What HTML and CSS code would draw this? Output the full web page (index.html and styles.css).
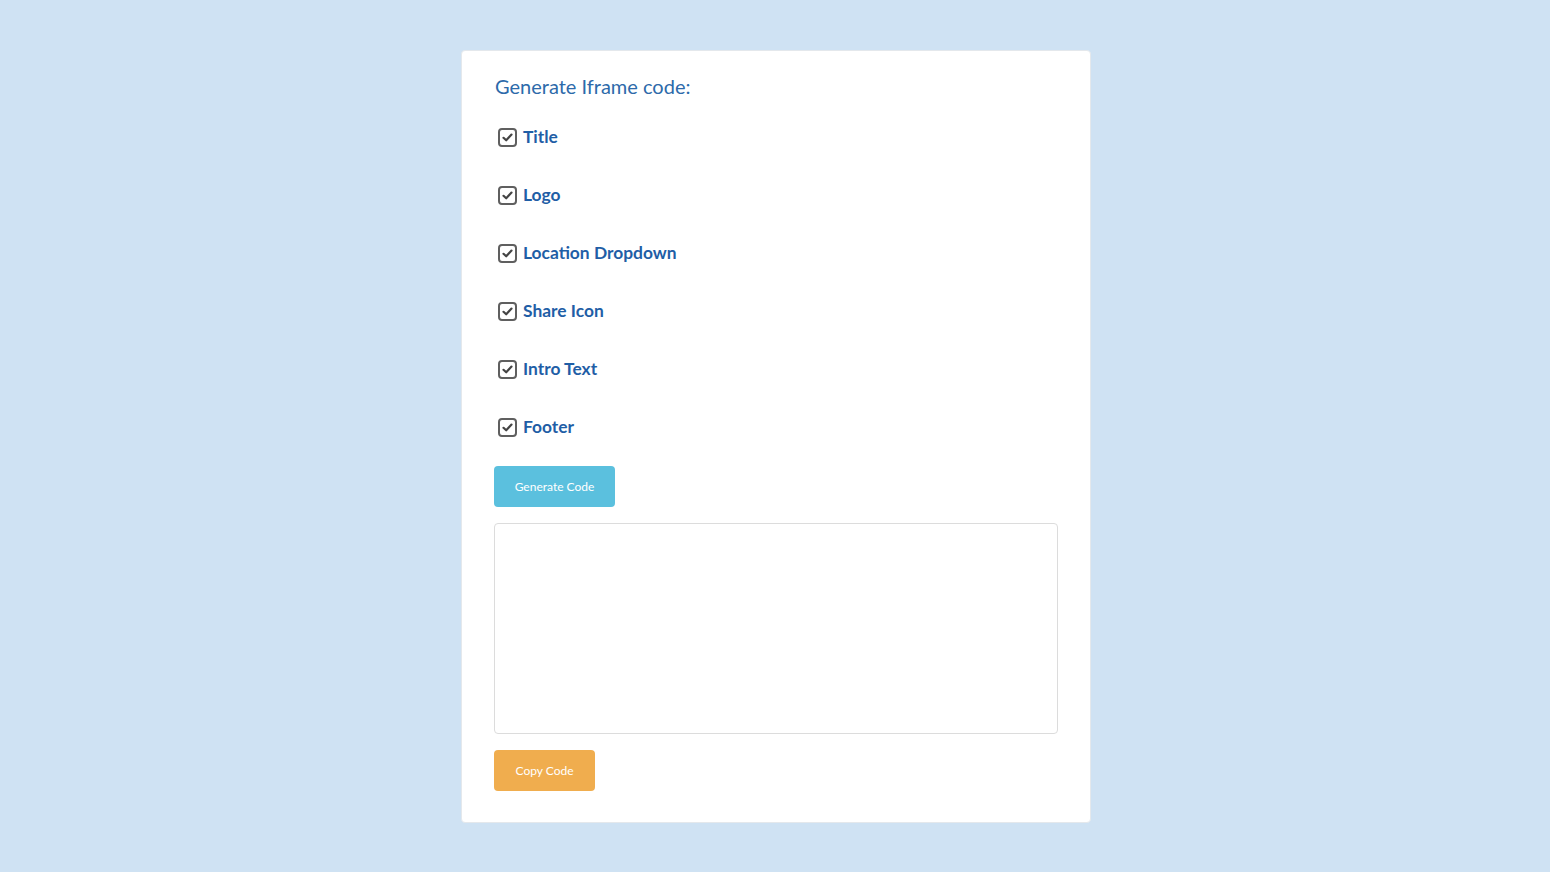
FILE: index.html
```html
<!DOCTYPE html>
<html lang="en">
<head>
<meta charset="utf-8">
<title>Generate Iframe code</title>
<link rel="stylesheet" href="styles.css">
</head>
<body>
<div class="card">
  <h2 class="heading">Generate Iframe code:</h2>
  <ul class="options">
    <li class="option"><span class="box"><svg viewBox="0 0 19 19" width="19" height="19"><rect x="1" y="1" width="17" height="17" rx="3" ry="3" fill="#fff" stroke="#5f5f5f" stroke-width="2"/><path d="M5.5 9.8 L8.2 12.3 L13.5 6.6" fill="none" stroke="#444" stroke-width="2.2" stroke-linecap="round" stroke-linejoin="round"/></svg></span><span class="label">Title</span></li>
    <li class="option"><span class="box"><svg viewBox="0 0 19 19" width="19" height="19"><rect x="1" y="1" width="17" height="17" rx="3" ry="3" fill="#fff" stroke="#5f5f5f" stroke-width="2"/><path d="M5.5 9.8 L8.2 12.3 L13.5 6.6" fill="none" stroke="#444" stroke-width="2.2" stroke-linecap="round" stroke-linejoin="round"/></svg></span><span class="label">Logo</span></li>
    <li class="option"><span class="box"><svg viewBox="0 0 19 19" width="19" height="19"><rect x="1" y="1" width="17" height="17" rx="3" ry="3" fill="#fff" stroke="#5f5f5f" stroke-width="2"/><path d="M5.5 9.8 L8.2 12.3 L13.5 6.6" fill="none" stroke="#444" stroke-width="2.2" stroke-linecap="round" stroke-linejoin="round"/></svg></span><span class="label">Location Dropdown</span></li>
    <li class="option"><span class="box"><svg viewBox="0 0 19 19" width="19" height="19"><rect x="1" y="1" width="17" height="17" rx="3" ry="3" fill="#fff" stroke="#5f5f5f" stroke-width="2"/><path d="M5.5 9.8 L8.2 12.3 L13.5 6.6" fill="none" stroke="#444" stroke-width="2.2" stroke-linecap="round" stroke-linejoin="round"/></svg></span><span class="label">Share Icon</span></li>
    <li class="option"><span class="box"><svg viewBox="0 0 19 19" width="19" height="19"><rect x="1" y="1" width="17" height="17" rx="3" ry="3" fill="#fff" stroke="#5f5f5f" stroke-width="2"/><path d="M5.5 9.8 L8.2 12.3 L13.5 6.6" fill="none" stroke="#444" stroke-width="2.2" stroke-linecap="round" stroke-linejoin="round"/></svg></span><span class="label">Intro Text</span></li>
    <li class="option"><span class="box"><svg viewBox="0 0 19 19" width="19" height="19"><rect x="1" y="1" width="17" height="17" rx="3" ry="3" fill="#fff" stroke="#5f5f5f" stroke-width="2"/><path d="M5.5 9.8 L8.2 12.3 L13.5 6.6" fill="none" stroke="#444" stroke-width="2.2" stroke-linecap="round" stroke-linejoin="round"/></svg></span><span class="label">Footer</span></li>
  </ul>
  <button class="btn btn-info" type="button">Generate Code</button>
  <textarea class="code"></textarea>
  <button class="btn btn-warning" type="button">Copy Code</button>
</div>
</body>
</html>
```
FILE: styles.css
```css
html, body {
  margin: 0;
  padding: 0;
}
body {
  background: #cfe2f3;
  font-family: Lato, "Open Sans", "Liberation Sans", sans-serif;
  min-height: 872px;
}
.card {
  box-sizing: border-box;
  width: 630px;
  height: 773px;
  margin: 50px 0 0 461px;
  background: #fff;
  border: 1px solid #e4e8ec;
  border-radius: 4px;
  padding: 23px 32px 0 32px;
  display: flex;
  flex-direction: column;
  align-items: flex-start;
}
.heading {
  margin: 0 0 0 1px;
  font-size: 20px;
  line-height: 25px;
  font-weight: 400;
  color: #2d6aaa;
}
.options {
  list-style: none;
  margin: 9px 0 0 0;
  padding: 0;
}
.option {
  height: 58px;
  display: flex;
  align-items: center;
  padding-left: 4px;
}
.box {
  width: 19px;
  height: 19px;
  display: flex;
  margin-right: 6px;
}
.label {
  font-size: 17.4px;
  font-weight: 700;
  color: #1f5ea6;
  line-height: 24px;
}
.btn {
  border: 0;
  border-radius: 4px;
  color: #fff;
  font-family: Lato, "Open Sans", "Liberation Sans", sans-serif;
  font-size: 12px;
  height: 41px;
  padding: 0;
  cursor: pointer;
}
.btn-info {
  margin-top: 10px;
  width: 121px;
  background: #5bc0de;
}
.btn-warning {
  margin-top: 16px;
  width: 101px;
  background: #f0ad4e;
}
.code {
  box-sizing: border-box;
  margin-top: 16px;
  width: 564px;
  height: 211px;
  border: 1px solid #dcdcdc;
  border-radius: 4px;
  resize: none;
  display: block;
}
```
